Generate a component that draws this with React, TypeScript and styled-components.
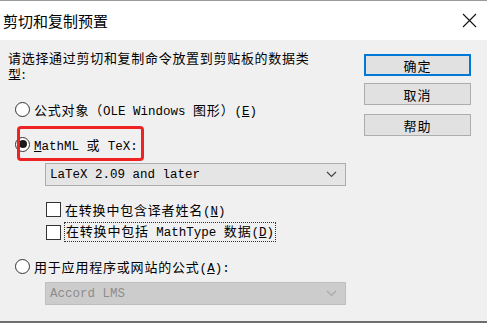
import React from "react";
import styled, { createGlobalStyle } from "styled-components";

const GlobalStyle = createGlobalStyle`
  html, body {
    margin: 0;
    padding: 0;
    background: #ffffff;
  }
  body {
    font-family: "Noto Sans CJK SC", "Liberation Sans", sans-serif;
    color: #000;
  }
`;

const Dialog = styled.div`
  width: 487px;
  height: 325px;
  box-sizing: border-box;
  border-top: 1px solid #9a9a9a;
  display: flex;
  flex-direction: column;
  overflow: hidden;
`;

const TitleBar = styled.div`
  height: 39px;
  background: #ffffff;
  display: flex;
  align-items: center;
  justify-content: space-between;
  padding: 0 10px 0 3px;
`;

const Title = styled.span`
  font-size: 15px;
  line-height: 20px;
`;

const Body = styled.div`
  height: 283px;
  background: #f0f0f0;
  border-bottom: 2px solid #6e6e6e;
  box-sizing: border-box;
  display: flex;
  justify-content: space-between;
  padding: 10px 16px 0 8px;
`;

const LeftColumn = styled.div`
  display: flex;
  flex-direction: column;
  width: 340px;
`;

const Prompt = styled.div`
  font-size: 13px;
  line-height: 16px;
  letter-spacing: 0.7px;
  height: 30px;
`;

const Latin = styled.span`
  font-family: "Liberation Mono", monospace;
  font-size: 12.5px;
  letter-spacing: 0;
`;

const OptionRow = styled.div<{ $top: number; $indent?: number }>`
  position: relative;
  display: flex;
  align-items: center;
  height: 20px;
  margin-top: ${({ $top }) => $top}px;
  padding-left: ${({ $indent }) => $indent ?? 7}px;
  font-size: 13px;
  letter-spacing: 0.8px;
  white-space: nowrap;
`;

const Radio = styled.span<{ $checked?: boolean }>`
  width: 15px;
  height: 15px;
  border: 1px solid #333;
  border-radius: 50%;
  background: #fff;
  box-sizing: border-box;
  display: flex;
  align-items: center;
  justify-content: center;
  margin-right: 4px;
  flex-shrink: 0;

  &::after {
    content: "";
    display: ${({ $checked }) => ($checked ? "block" : "none")};
    width: 8px;
    height: 8px;
    border-radius: 50%;
    background: #1a1a1a;
  }
`;

const Checkbox = styled.span`
  width: 15px;
  height: 15px;
  border: 1px solid #333;
  background: #fff;
  box-sizing: border-box;
  margin-right: 4px;
  flex-shrink: 0;
`;

const Focused = styled.span`
  outline: 1px dotted #333;
  outline-offset: 0;
  padding: 0 1px;
  line-height: 15px;
`;

const Highlight = styled.div`
  position: absolute;
  left: 9px;
  top: -8px;
  width: 127px;
  height: 35px;
  box-sizing: border-box;
  border: 3px solid #ee2222;
  border-radius: 4px;
  pointer-events: none;
`;

const Select = styled.div<{ $disabled?: boolean; $top: number }>`
  margin-top: ${({ $top }) => $top}px;
  margin-left: 37px;
  width: 301px;
  height: 23px;
  box-sizing: border-box;
  border: 1px solid ${({ $disabled }) => ($disabled ? "#bfbfbf" : "#adadad")};
  background: ${({ $disabled }) => ($disabled ? "#cccccc" : "#e5e5e5")};
  color: ${({ $disabled }) => ($disabled ? "#8c8c8c" : "#000")};
  display: flex;
  align-items: center;
  justify-content: space-between;
  padding: 0 8px 0 4px;
  font-family: "Liberation Mono", monospace;
  font-size: 12.5px;

  svg {
    stroke: ${({ $disabled }) => ($disabled ? "#a8a8a8" : "#444")};
  }
`;

const ButtonColumn = styled.div`
  display: flex;
  flex-direction: column;
  padding-top: 4px;
`;

const Button = styled.div<{ $default?: boolean; $top: number }>`
  width: 107px;
  height: 22px;
  margin-top: ${({ $top }) => $top}px;
  box-sizing: border-box;
  background: #e1e1e1;
  border: ${({ $default }) =>
    $default ? "2px solid #0078d7" : "1px solid #adadad"};
  display: flex;
  align-items: center;
  justify-content: center;
  font-size: 13px;
  letter-spacing: 1px;
`;

const Chevron = () => (
  <svg width="11" height="7" viewBox="0 0 11 7" fill="none" strokeWidth="1.2">
    <path d="M1 1l4.5 4.5L10 1" />
  </svg>
);

const CloseIcon = () => (
  <svg width="15" height="15" viewBox="0 0 15 15" stroke="#111" strokeWidth="1.1">
    <path d="M1 1l13 13M14 1L1 14" />
  </svg>
);

export default function App() {
  return (
    <>
      <GlobalStyle />
      <Dialog>
        <TitleBar>
          <Title>剪切和复制预置</Title>
          <CloseIcon />
        </TitleBar>
        <Body>
          <LeftColumn>
            <Prompt>
              请选择通过剪切和复制命令放置到剪贴板的数据类
              <br />
              型:
            </Prompt>
            <OptionRow $top={19}>
              <Radio />
              <span>
                公式对象（<Latin>OLE Windows </Latin>图形）<Latin>(<u>E</u>)</Latin>
              </span>
            </OptionRow>
            <OptionRow $top={15}>
              <Radio $checked />
              <span>
                <Latin>
                  <u>M</u>athML{" "}
                </Latin>
                或
                <Latin> TeX:</Latin>
              </span>
              <Highlight />
            </OptionRow>
            <Select $top={9}>
              <span>LaTeX 2.09 and later</span>
              <Chevron />
            </Select>
            <OptionRow $top={13} $indent={38}>
              <Checkbox />
              <span>
                在转换中包含译者姓名<Latin>(<u>N</u>)</Latin>
              </span>
            </OptionRow>
            <OptionRow $top={3} $indent={38}>
              <Checkbox />
              <Focused>
                在转换中包括<Latin> MathType </Latin>数据<Latin>(<u>D</u>)</Latin>
              </Focused>
            </OptionRow>
            <OptionRow $top={14}>
              <Radio />
              <span>
                用于应用程序或网站的公式<Latin>(<u>A</u>):</Latin>
              </span>
            </OptionRow>
            <Select $disabled $top={6}>
              <span>Accord LMS</span>
              <Chevron />
            </Select>
          </LeftColumn>
          <ButtonColumn>
            <Button $default $top={0}>确定</Button>
            <Button $top={7}>取消</Button>
            <Button $top={9}>帮助</Button>
          </ButtonColumn>
        </Body>
      </Dialog>
    </>
  );
}
